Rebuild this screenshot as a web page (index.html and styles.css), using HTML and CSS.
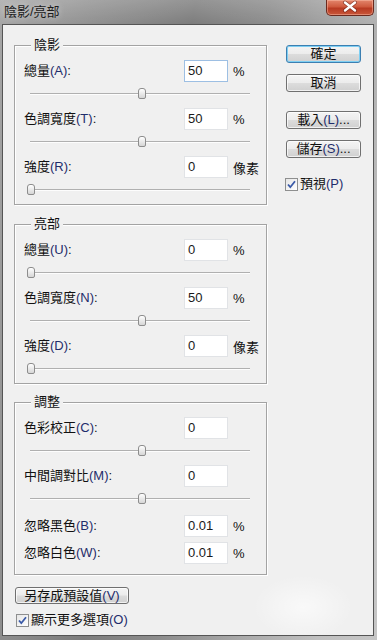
FILE: index.html
```html
<!DOCTYPE html>
<html lang="zh-Hant">
<head>
<meta charset="utf-8">
<title>陰影/亮部</title>
<link rel="stylesheet" href="styles.css">
</head>
<body>
<div class="window">
  <div class="titlebar">
    <span class="title">陰影/亮部</span>
    <div class="close">
      <svg width="48" height="16" viewBox="0 0 48 16">
        <path d="M19 3.5 L29 11.5 M29 3.5 L19 11.5" stroke="#5a1a10" stroke-width="4" stroke-linecap="round" fill="none" opacity="0.55"/>
        <path d="M19 3.5 L29 11.5 M29 3.5 L19 11.5" stroke="#ffffff" stroke-width="2.4" stroke-linecap="round" fill="none"/>
      </svg>
    </div>
  </div>
  <div class="client">
    <div class="main">
      <div class="group">
        <span class="legend">陰影</span>
        <div class="row"><span class="lbl">總量<span class="k">(A)</span>:</span><span class="field focus">50</span><span class="unit">%</span></div>
        <div class="slider"><div class="track"></div><div class="thumb" style="left:114px"></div></div>
        <div class="row"><span class="lbl">色調寬度<span class="k">(T)</span>:</span><span class="field">50</span><span class="unit">%</span></div>
        <div class="slider"><div class="track"></div><div class="thumb" style="left:114px"></div></div>
        <div class="row"><span class="lbl">強度<span class="k">(R)</span>:</span><span class="field">0</span><span class="unit">像素</span></div>
        <div class="slider"><div class="track"></div><div class="thumb" style="left:3px"></div></div>
      </div>
      <div class="group g2">
        <span class="legend">亮部</span>
        <div class="row"><span class="lbl">總量<span class="k">(U)</span>:</span><span class="field">0</span><span class="unit">%</span></div>
        <div class="slider"><div class="track"></div><div class="thumb" style="left:3px"></div></div>
        <div class="row"><span class="lbl">色調寬度<span class="k">(N)</span>:</span><span class="field">50</span><span class="unit">%</span></div>
        <div class="slider"><div class="track"></div><div class="thumb" style="left:114px"></div></div>
        <div class="row"><span class="lbl">強度<span class="k">(D)</span>:</span><span class="field">0</span><span class="unit">像素</span></div>
        <div class="slider"><div class="track"></div><div class="thumb" style="left:3px"></div></div>
      </div>
      <div class="group g3">
        <span class="legend">調整</span>
        <div class="row"><span class="lbl">色彩校正<span class="k">(C)</span>:</span><span class="field">0</span></div>
        <div class="slider"><div class="track"></div><div class="thumb" style="left:114px"></div></div>
        <div class="row"><span class="lbl">中間調對比<span class="k">(M)</span>:</span><span class="field">0</span></div>
        <div class="slider"><div class="track"></div><div class="thumb" style="left:114px"></div></div>
        <div class="row r-black"><span class="lbl">忽略黑色<span class="k">(B)</span>:</span><span class="field">0.01</span><span class="unit">%</span></div>
        <div class="row r-white"><span class="lbl">忽略白色<span class="k">(W)</span>:</span><span class="field">0.01</span><span class="unit">%</span></div>
      </div>
      <button class="btn wide">另存成預設值<span class="k">(V)</span></button>
      <div class="check more">
        <span class="box"><svg width="13" height="13" viewBox="0 0 13 13"><path d="M3 6.5 L5.3 9.2 L10 3.2" stroke="#3a5aa8" stroke-width="1.8" fill="none"/></svg></span>
        <span>顯示更多選項<span class="k">(O)</span></span>
      </div>
    </div>
    <div class="side">
      <button class="btn default">確定</button>
      <button class="btn b-cancel">取消</button>
      <button class="btn b-load">載入<span class="k">(L)</span>...</button>
      <button class="btn b-save">儲存<span class="k">(S)</span>...</button>
      <div class="check preview">
        <span class="box"><svg width="13" height="13" viewBox="0 0 13 13"><path d="M3 6.5 L5.3 9.2 L10 3.2" stroke="#3a5aa8" stroke-width="1.8" fill="none"/></svg></span>
        <span>預視<span class="k">(P)</span></span>
      </div>
    </div>
  </div>
</div>
</body>
</html>
```
FILE: styles.css
```css
html, body {
  margin: 0;
  padding: 0;
}
body {
  width: 377px;
  height: 640px;
  overflow: hidden;
  font-family: "Liberation Sans", "Noto Sans CJK TC", sans-serif;
  font-size: 13px;
  color: #111;
}
.window {
  width: 377px;
  height: 640px;
  box-sizing: border-box;
  padding: 0 3px 4px 2px;
  display: flex;
  flex-direction: column;
  background:
    linear-gradient(180deg, rgba(255,255,255,0.18), rgba(255,255,255,0) 24px),
    linear-gradient(100deg, #a6a6a6 0%, #929292 18%, #7d7d7d 40%, #8c8c8c 55%, #a9a9a9 72%, #c0c0c0 88%, #c6c6c6 100%);
}
.titlebar {
  height: 24px;
  display: flex;
  align-items: flex-start;
  flex: none;
}
.title {
  margin: 3px 0 0 2px;
  line-height: 17px;
  font-size: 13px;
  color: #1c1c1c;
  text-shadow: 0 0 6px rgba(255,255,255,0.55);
}
.close {
  margin-left: auto;
  margin-right: 0;
  width: 48px;
  height: 16px;
  box-sizing: border-box;
  border: 1px solid #6b2a1e;
  border-top: none;
  border-radius: 0 0 5px 5px;
  background: linear-gradient(180deg, #e3866c 0%, #cf5a3e 45%, #b83a22 55%, #c9573a 100%);
  box-shadow: inset 0 0 0 1px rgba(255,200,180,0.45);
  overflow: hidden;
}
.close svg {
  display: block;
  margin: -1px 0 0 -1px;
}
.client {
  flex: 1;
  min-height: 0;
  display: flex;
  border: 1px solid #555;
  background:
    radial-gradient(ellipse 50px 32px at 300px 582px, rgba(255,255,255,0.6), rgba(255,255,255,0)),
    #f0f0f0;
}
.main {
  margin-left: 11px;
  padding-top: 20px;
  width: 253px;
  flex: none;
}
.side {
  margin-left: 19px;
  padding-top: 20px;
  width: 75px;
  display: flex;
  flex-direction: column;
}
.group {
  position: relative;
  border: 1px solid #a3a3a3;
  box-shadow: inset 1px 1px 0 #fff, 1px 1px 0 #fff;
  padding: 14px 0 0 9px;
}
.g2 { margin-top: 19px; }
.g3 { margin-top: 18px; padding-bottom: 10px; }
.legend {
  position: absolute;
  left: 16px;
  top: -9px;
  padding: 0 3px;
  line-height: 16px;
  background: #f0f0f0;
}
.row {
  display: flex;
  align-items: center;
  height: 22px;
}
.lbl {
  width: 160px;
  white-space: nowrap;
  line-height: 22px;
}
.k { color: #1f2d6b; }
.field {
  width: 44px;
  height: 22px;
  box-sizing: border-box;
  border: 1px solid #e1e3e6;
  background: #fff;
  padding-left: 3px;
  line-height: 20px;
  color: #1a1a1a;
}
.field.focus {
  border-color: #9dbfe3;
}
.unit {
  margin-left: 5px;
}
.slider {
  position: relative;
  height: 26px;
  box-sizing: border-box;
  padding-top: 11px;
}
.track {
  margin-left: 6px;
  width: 220px;
  height: 1px;
  background: #b0b0b0;
  box-shadow: 0 1px 0 #fdfdfd;
}
.thumb {
  position: absolute;
  top: 6px;
  width: 8px;
  height: 11px;
  box-sizing: border-box;
  border: 1px solid #8d8d8d;
  border-radius: 3px 3px 2px 2px;
  background: linear-gradient(180deg, #ffffff, #d6d6d6);
}
.r-black { margin-top: 2px; }
.r-white { margin-top: 5px; }
.btn {
  font: inherit;
  color: #111;
  padding: 0;
  height: 18px;
  line-height: 16px;
  box-sizing: border-box;
  border: 1px solid #707070;
  border-radius: 3px;
  background: linear-gradient(180deg, #f4f4f4 0%, #ececec 48%, #dcdcdc 52%, #d0d0d0 100%);
  box-shadow: inset 0 0 0 1px rgba(255,255,255,0.7);
  text-align: center;
  white-space: nowrap;
}
.side .btn { width: 75px; }
.btn.default {
  border-color: #3c7fb1;
  box-shadow: inset 0 0 0 1px #7ecff3;
}
.b-cancel { margin-top: 11px; }
.b-load { margin-top: 19px; }
.b-save { margin-top: 11px; }
.btn.wide {
  display: block;
  width: 114px;
  height: 17px;
  margin: 12px 0 0 1px;
}
.check {
  display: flex;
  align-items: center;
  height: 14px;
  line-height: 14px;
  white-space: nowrap;
}
.box {
  width: 13px;
  height: 13px;
  box-sizing: border-box;
  border: 1px solid #8e8f8f;
  background: linear-gradient(135deg, #e6e6e6, #ffffff);
  margin-right: 2px;
  flex: none;
  position: relative;
}
.box svg {
  display: block;
  margin: -1px 0 0 -1px;
}
.more { margin: 9px 0 0 2px; }
.preview { margin: 19px 0 0 -1px; }
```
